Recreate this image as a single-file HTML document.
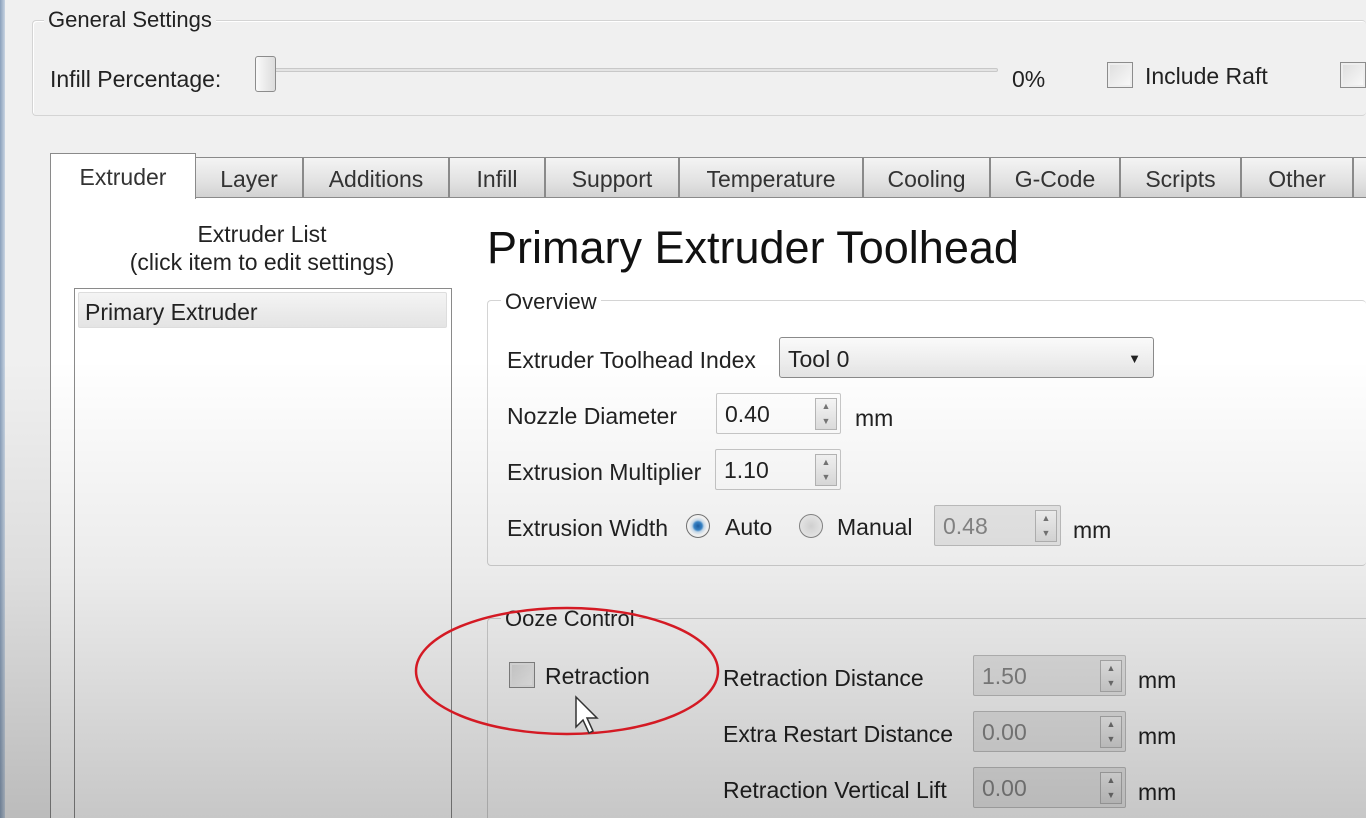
<!DOCTYPE html>
<html><head><meta charset="utf-8"><style>
*{margin:0;padding:0;box-sizing:border-box}
html,body{width:1366px;height:818px;overflow:hidden}
body{background:#f0f0f0;font-family:"Liberation Sans",sans-serif;font-size:23px;color:#222;position:relative}
.a{position:absolute;white-space:nowrap}
.grp{position:absolute;border:1px solid #d4d4d4;border-radius:4px;box-shadow:inset 1px 1px 0 #fff}
.tab{position:absolute;top:157px;height:40px;border:1px solid #8a8a8a;border-bottom:none;background:linear-gradient(#f4f4f4,#e2e2e2 60%,#d2d2d2);text-align:center;line-height:42px;font-size:23px;color:#333}
.box{position:absolute;background:#fff;border:1px solid #c9c9c9;border-radius:2px;line-height:40px;padding-left:8px}
.spin{position:absolute;right:3px;top:4px;width:22px;height:32px;border:1px solid #b8b8b8;background:linear-gradient(#f8f8f8,#e0e0e0);font-size:9px;line-height:15px;text-align:center;color:#777}
.cb{position:absolute;width:26px;height:26px;border:1px solid #8c8c8c;background:linear-gradient(135deg,#ddd,#fafafa);box-shadow:inset 0 0 0 2px #eee}
.dis{background:#ececec;color:#888;border-color:#c2c2c2}
</style></head><body>
<div class="a" style="left:0;top:0;width:5px;height:818px;background:linear-gradient(90deg,#8aa0bb,#c8d4e2)"></div>

<div class="grp" style="left:32px;top:20px;width:1334px;height:96px;border-right:none"></div>
<div class="a" style="left:44px;top:7px;background:#f0f0f0;padding:0 4px;font-size:22px">General Settings</div>
<div class="a" style="left:50px;top:66px">Infill Percentage:</div>
<div class="a" style="left:270px;top:68px;width:728px;height:4px;border:1px solid #c8c8c8;background:#e4e4e4;border-radius:2px"></div>
<div class="a" style="left:255px;top:56px;width:21px;height:36px;border:1px solid #8c8c8c;border-radius:3px;background:linear-gradient(90deg,#fafafa,#dcdcdc)"></div>
<div class="a" style="left:1012px;top:66px">0%</div>
<div class="cb" style="left:1107px;top:62px"></div>
<div class="a" style="left:1145px;top:63px">Include Raft</div>
<div class="cb" style="left:1340px;top:62px"></div>

<div class="a" style="left:50px;top:197px;width:1316px;height:621px;background:#fff;border-left:1px solid #8a8a8a;border-top:1px solid #8a8a8a"></div>
<div class="a" style="left:50px;top:153px;width:146px;height:46px;background:#fff;border:1px solid #8a8a8a;border-bottom:none;text-align:center;line-height:46px;color:#333">Extruder</div>
<div class="tab" style="left:195px;width:108px">Layer</div>
<div class="tab" style="left:303px;width:146px">Additions</div>
<div class="tab" style="left:449px;width:96px">Infill</div>
<div class="tab" style="left:545px;width:134px">Support</div>
<div class="tab" style="left:679px;width:184px">Temperature</div>
<div class="tab" style="left:863px;width:127px">Cooling</div>
<div class="tab" style="left:990px;width:130px">G-Code</div>
<div class="tab" style="left:1120px;width:121px">Scripts</div>
<div class="tab" style="left:1241px;width:112px">Other</div>
<div class="tab" style="left:1353px;width:13px;border-right:none"></div>

<div class="a" style="left:92px;top:220px;width:340px;text-align:center;line-height:28px">Extruder List<br>(click item to edit settings)</div>
<div class="a" style="left:74px;top:288px;width:378px;height:530px;border:1px solid #8a8a8a;border-bottom:none;background:#fff"></div>
<div class="a" style="left:78px;top:292px;width:369px;height:36px;background:linear-gradient(#f4f4f4,#e4e4e4);border:1px solid #ddd;border-radius:2px;line-height:38px;padding-left:6px">Primary Extruder</div>

<div class="a" style="left:487px;top:222px;font-size:45px;color:#111">Primary Extruder Toolhead</div>

<div class="grp" style="left:487px;top:300px;width:879px;height:266px;background:#fff;border-right:none"></div>
<div class="a" style="left:501px;top:289px;background:#fff;padding:0 4px;font-size:22px">Overview</div>
<div class="a" style="left:507px;top:347px">Extruder Toolhead Index</div>
<div class="a" style="left:779px;top:337px;width:375px;height:41px;border:1px solid #8a8a8a;border-radius:3px;background:linear-gradient(#fafafa,#e4e4e4);line-height:42px;padding-left:8px">Tool 0<span style="position:absolute;right:12px;top:0;font-size:13px">&#9660;</span></div>
<div class="a" style="left:507px;top:403px">Nozzle Diameter</div>
<div class="box" style="left:716px;top:393px;width:125px;height:41px">0.40<div class="spin">▲<br>▼</div></div>
<div class="a" style="left:855px;top:405px">mm</div>
<div class="a" style="left:507px;top:459px">Extrusion Multiplier</div>
<div class="box" style="left:715px;top:449px;width:126px;height:41px">1.10<div class="spin">▲<br>▼</div></div>
<div class="a" style="left:507px;top:515px">Extrusion Width</div>
<div class="a" style="left:686px;top:514px;width:24px;height:24px;border-radius:50%;border:1px solid #777;background:radial-gradient(circle,#1a5fa8 0,#3a8ad0 4px,#cfe4f6 6px,#fff 9px)"></div>
<div class="a" style="left:725px;top:514px">Auto</div>
<div class="a" style="left:799px;top:514px;width:24px;height:24px;border-radius:50%;border:1px solid #888;background:radial-gradient(circle,#ddd,#fafafa)"></div>
<div class="a" style="left:837px;top:514px">Manual</div>
<div class="box dis" style="left:934px;top:505px;width:127px;height:41px">0.48<div class="spin">▲<br>▼</div></div>
<div class="a" style="left:1073px;top:517px">mm</div>

<div class="a" style="left:487px;top:618px;width:879px;height:200px;border-left:1px solid #d4d4d4;border-top:1px solid #d4d4d4;border-top-left-radius:4px"></div>
<div class="a" style="left:501px;top:606px;background:#fff;padding:0 4px;font-size:22px">Ooze Control</div>
<div class="cb" style="left:509px;top:662px"></div>
<div class="a" style="left:545px;top:663px">Retraction</div>
<div class="a" style="left:723px;top:665px">Retraction Distance</div>
<div class="box dis" style="left:973px;top:655px;width:153px;height:41px">1.50<div class="spin">▲<br>▼</div></div>
<div class="a" style="left:1138px;top:667px">mm</div>
<div class="a" style="left:723px;top:721px">Extra Restart Distance</div>
<div class="box dis" style="left:973px;top:711px;width:153px;height:41px">0.00<div class="spin">▲<br>▼</div></div>
<div class="a" style="left:1138px;top:723px">mm</div>
<div class="a" style="left:723px;top:777px">Retraction Vertical Lift</div>
<div class="box dis" style="left:973px;top:767px;width:153px;height:41px">0.00<div class="spin">▲<br>▼</div></div>
<div class="a" style="left:1138px;top:779px">mm</div>

<div class="a" style="left:0;top:0;width:1366px;height:818px;background:linear-gradient(rgba(0,0,0,0) 44%,rgba(0,0,0,0.08) 70%,rgba(0,0,0,0.22) 100%);pointer-events:none"></div>

<svg class="a" style="left:0;top:0" width="1366" height="818">
<ellipse cx="567" cy="671" rx="151" ry="63" fill="none" stroke="#d41a24" stroke-width="2.5"/>
<path d="M576 697 L576 727 L583 720 L589 733 L593 731 L587 718 L597 718 Z" fill="#fff" stroke="#333" stroke-width="1.5"/>
</svg>
</body></html>
